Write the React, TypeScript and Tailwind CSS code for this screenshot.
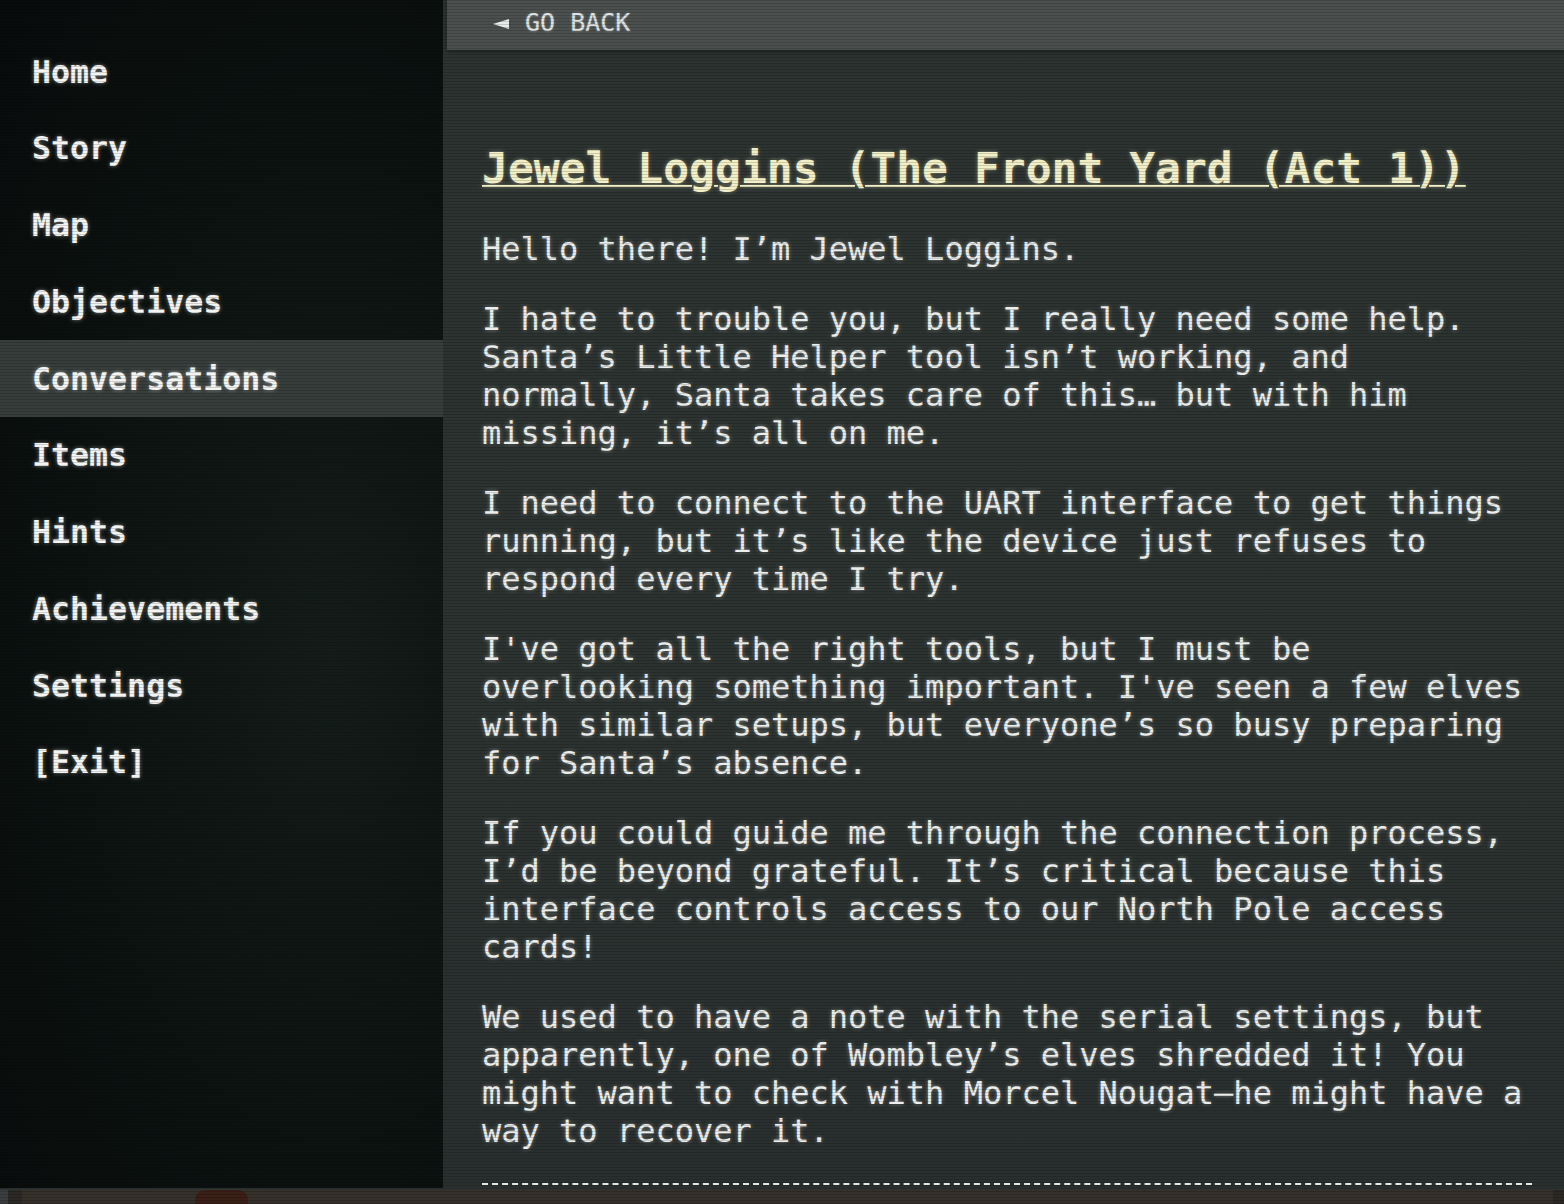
import React from "react";

const navItems = [
  "Home",
  "Story",
  "Map",
  "Objectives",
  "Conversations",
  "Items",
  "Hints",
  "Achievements",
  "Settings",
  "[Exit]",
];

const paragraphs: string[] = [
  "Hello there! I’m Jewel Loggins.",
  "I hate to trouble you, but I really need some help. Santa’s Little Helper tool isn’t working, and normally, Santa takes care of this… but with him missing, it’s all on me.",
  "I need to connect to the UART interface to get things running, but it’s like the device just refuses to respond every time I try.",
  "I've got all the right tools, but I must be overlooking something important. I've seen a few elves with similar setups, but everyone’s so busy preparing for Santa’s absence.",
  "If you could guide me through the connection process, I’d be beyond grateful. It’s critical because this interface controls access to our North Pole access cards!",
  "We used to have a note with the serial settings, but apparently, one of Wombley’s elves shredded it! You might want to check with Morcel Nougat—he might have a way to recover it.",
];

export default function App() {
  return (
    <div className="relative w-[1564px] h-[1204px] overflow-hidden bg-[#2b3230] font-['DejaVu_Sans_Mono',monospace]">
      <div className="flex h-[1188px]">
        <nav className="w-[443px] shrink-0 pt-[33px] bg-[radial-gradient(ellipse_at_75%_55%,#141d1a_0%,#0d1412_45%,#080b0b_100%)]">
          {navItems.map((item) => (
            <div
              key={item}
              className={`h-[76.75px] flex items-center pl-[32px] pt-[2px] text-[31.6px] font-bold text-[#f4f4f2] [text-shadow:0_0_4px_rgba(255,255,255,0.45)] ${
                item === "Conversations" ? "bg-[#363d3b]" : ""
              }`}
            >
              {item}
            </div>
          ))}
        </nav>
        <main className="flex-1 flex flex-col bg-[linear-gradient(180deg,#2c3331_0%,#2b3230_60%,#292f2e_100%)]">
          <div className="ml-[4px] h-[50px] shrink-0 bg-[#4b504f] flex items-start pt-[8px] pl-[46px] shadow-[0_2px_4px_rgba(0,0,0,0.35)]">
            <div className="h-[30px] flex items-center gap-[16px] text-[25px] leading-[30px] text-[#dfe3e2] [text-shadow:0_0_3px_rgba(255,255,255,0.35)]">
              <svg width="16" height="10" viewBox="0 0 16 10" className="mt-[2px]">
                <polygon points="0,5 16,0 16,10" fill="#e8ecea" />
              </svg>
              <span>GO BACK</span>
            </div>
          </div>
          <div className="pl-[39px] pr-[29px] pt-[92px] w-[1121px]">
            <h1 className="text-[43px] leading-[52px] font-bold text-[#f3efc6] underline decoration-2 underline-offset-[2px] decoration-[#f3efc6] [text-shadow:0_0_4px_rgba(243,239,198,0.45)] mb-[36px]">
              Jewel Loggins (The Front Yard (Act 1))
            </h1>
            {paragraphs.map((p, i) => (
              <p
                key={i}
                className="text-[32px] leading-[38px] text-[#eceeec] mb-[32px] [text-shadow:0_0_4px_rgba(255,255,255,0.4)]"
              >
                {p}
              </p>
            ))}
            <div className="mt-[33px] w-[1050px] border-t-2 border-dashed border-[#e6e8e6]" />
          </div>
        </main>
      </div>
      <div className="h-[16px] flex border-t-2 border-[#2f3432] bg-[#35302a]">
        <div className="w-[8px] bg-[#3a3e40]" />
        <div className="w-[14px] bg-[#2b2825]" />
        <div className="w-[173px]" />
        <div className="w-[53px] rounded-t-[10px] bg-[#3a1f16]" />
        <div className="flex-1" />
        <div className="w-[11px] bg-[#2a2724]" />
      </div>
      <div className="pointer-events-none absolute inset-0 bg-[repeating-linear-gradient(180deg,rgba(0,0,0,0.16)_0px,rgba(0,0,0,0.16)_1px,rgba(0,0,0,0)_1px,rgba(0,0,0,0)_3px)]" />
    </div>
  );
}
